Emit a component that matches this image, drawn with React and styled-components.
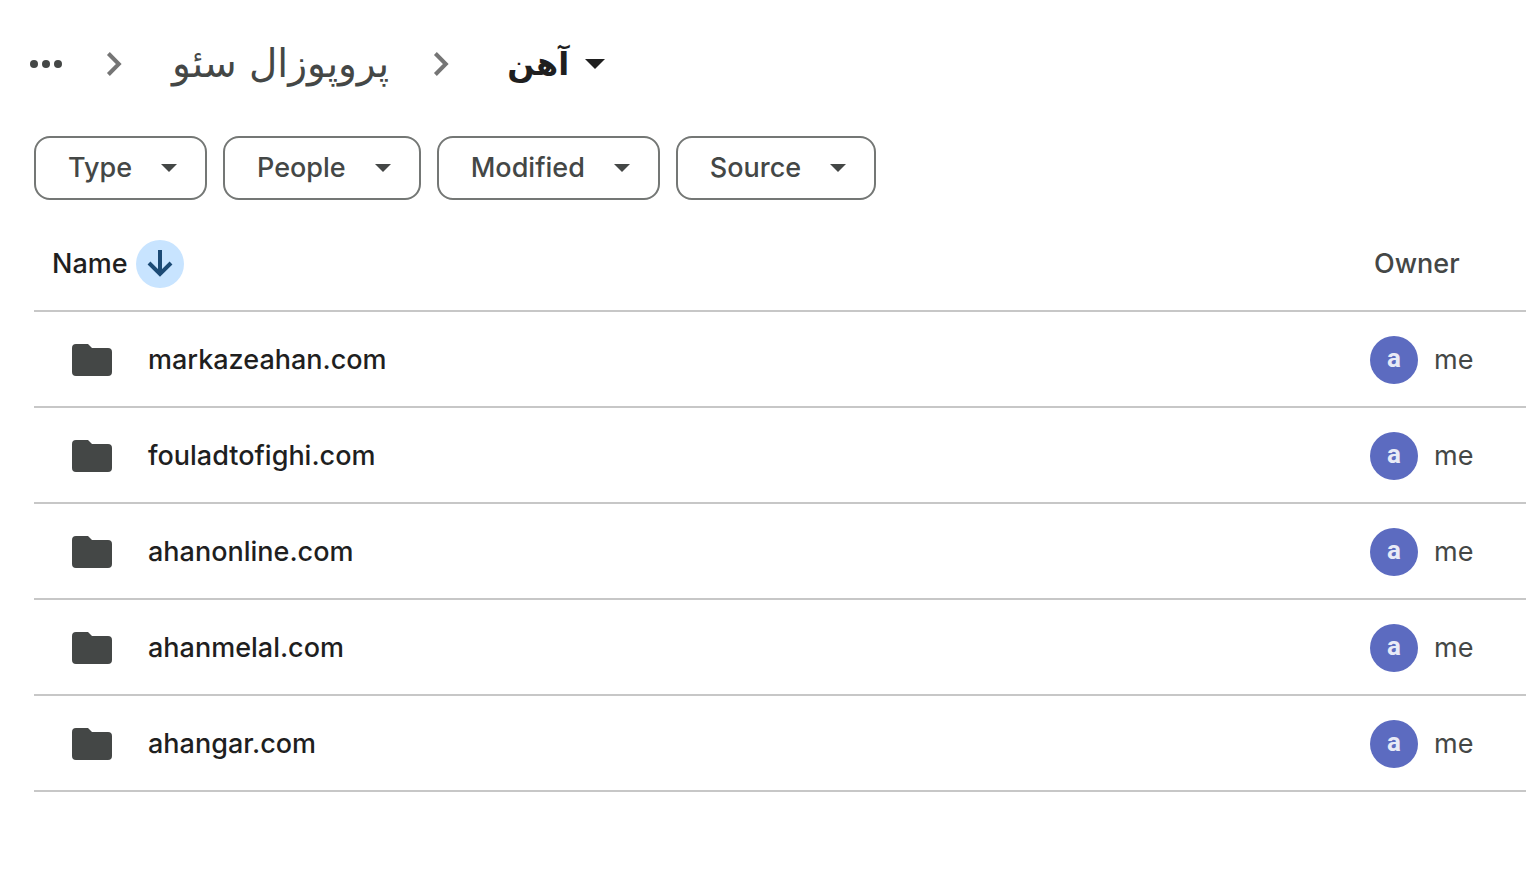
import React from "react";
import styled, { createGlobalStyle } from "styled-components";

const GlobalStyle = createGlobalStyle`
  *, *::before, *::after { box-sizing: border-box; }
  body {
    margin: 0;
    background: #fff;
    color: #1f1f1f;
    font-family: Inter, "Liberation Sans", sans-serif;
    font-size: 27px;
    line-height: 36px;
  }
  button { font: inherit; color: inherit; background: none; border: 0; padding: 0; cursor: pointer; }
  a { color: inherit; text-decoration: none; }
  svg { display: block; flex: none; }
`;

const Page = styled.main`
  padding: 24px 0 84px 34px;
`;

const Breadcrumbs = styled.nav`
  display: flex;
  align-items: center;
  height: 80px;
  margin-bottom: 32px;
  margin-left: -4px;
  font-family: "DejaVu Sans", sans-serif;
  font-size: 39px;
  line-height: 48px;
`;

const MoreButton = styled.button`
  display: flex;
  align-items: center;
  height: 48px;
  color: #444746;
`;

const Separator = styled.span`
  display: flex;
  margin: 0 48px 0 42px;
  color: #757575;
`;

const Crumb = styled.a`
  color: #444746;
`;

const CurrentCrumb = styled.button`
  display: flex;
  align-items: center;
  gap: 16px;
  margin-left: 8px;
  font-size: 32px;
`;

const Filters = styled.div`
  display: flex;
  gap: 16px;
`;

const FilterButton = styled.button`
  display: flex;
  align-items: center;
  gap: 29px;
  height: 64px;
  padding: 0 28px 0 32px;
  border: 2px solid #747775;
  border-radius: 16px;
  color: #444746;
  font-weight: 500;
`;

const FileTable = styled.table`
  width: 100%;
  margin-top: 16px;
  border-spacing: 0;
  table-layout: fixed;
`;

const HeadCell = styled.th`
  width: ${(p) => p.$width || "auto"};
  padding: 24px 0 22px ${(p) => p.$inset};
  border-bottom: 2px solid #c7c7c7;
  color: ${(p) => p.$color || "#444746"};
  font-weight: 500;
  text-align: left;
`;

const Cell = styled.td`
  padding: 24px 0 22px ${(p) => p.$inset || "0"};
  border-bottom: 2px solid #c7c7c7;
`;

const CellContent = styled.div`
  display: flex;
  align-items: center;
  gap: ${(p) => p.$gap || "0"};
  height: 48px;
`;

const SortButton = styled.button`
  display: grid;
  place-items: center;
  width: 48px;
  height: 48px;
  border-radius: 50%;
  background: #c8e4ff;
  color: #1b4a75;
`;

const FileLink = styled.a`
  font-weight: 500;
`;

const Avatar = styled.span`
  display: grid;
  place-items: center;
  width: 48px;
  height: 48px;
  border-radius: 50%;
  background: #5c6bc0;
  color: #e8eaf6;
  font-family: Roboto, sans-serif;
  font-size: 26px;
  font-weight: 700;
  line-height: 24px;
  padding-bottom: 4px;
`;

const OwnerName = styled.span`
  color: #444746;
`;

const Caret = ({ width, height }) => (
  <svg width={width} height={height} viewBox="0 0 20 10" preserveAspectRatio="none" aria-hidden="true">
    <path d="M0 0h20L10 10z" fill="currentColor" />
  </svg>
);

const DotsIcon = () => (
  <svg width="32" height="8" viewBox="0 0 32 8" fill="currentColor" aria-hidden="true">
    <circle cx="4" cy="4" r="4" />
    <circle cx="16" cy="4" r="4" />
    <circle cx="28" cy="4" r="4" />
  </svg>
);

const ChevronIcon = () => (
  <svg width="20" height="24" viewBox="0 0 20 24" fill="none" stroke="currentColor" strokeWidth="4" aria-hidden="true">
    <path d="M4.400 1.500 14.800 12 4.400 22.500" />
  </svg>
);

const ArrowDownIcon = () => (
  <svg width="26" height="28" viewBox="0 0 26 28" fill="none" stroke="currentColor" strokeWidth="4" aria-hidden="true">
    <path d="M13 0v24M2 13l11 11 11-11" />
  </svg>
);

const FolderIcon = () => (
  <svg width="40" height="32" viewBox="0 0 40 32" fill="#444746" aria-hidden="true">
    <path d="M4 0h12l4 4h16a4 4 0 0 1 4 4v20a4 4 0 0 1-4 4H4a4 4 0 0 1-4-4V4a4 4 0 0 1 4-4z" />
  </svg>
);

const filters = ["Type", "People", "Modified", "Source"];
const files = [
  "markazeahan.com",
  "fouladtofighi.com",
  "ahanonline.com",
  "ahanmelal.com",
  "ahangar.com",
];

export default function App() {
  return (
    <>
      <GlobalStyle />
      <Page>
        <Breadcrumbs aria-label="Folder path">
          <MoreButton type="button" aria-label="Show path">
            <DotsIcon />
          </MoreButton>
          <Separator><ChevronIcon /></Separator>
          <Crumb href="#parent" lang="fa" dir="rtl">پروپوزال سئو</Crumb>
          <Separator><ChevronIcon /></Separator>
          <CurrentCrumb type="button">
            <b lang="fa" dir="rtl">آهن</b>
            <Caret width="20" height="10" />
          </CurrentCrumb>
        </Breadcrumbs>

        <Filters>
          {filters.map((label) => (
            <FilterButton type="button" key={label}>
              {label}
              <Caret width="16" height="8" />
            </FilterButton>
          ))}
        </Filters>

        <FileTable>
          <thead>
            <tr>
              <HeadCell scope="col" $inset="18px" $color="#1f1f1f">
                <CellContent $gap="8px">
                  Name
                  <SortButton type="button" aria-label="Reverse sort direction">
                    <ArrowDownIcon />
                  </SortButton>
                </CellContent>
              </HeadCell>
              <HeadCell scope="col" $inset="4px" $width="156px">
                <CellContent>Owner</CellContent>
              </HeadCell>
            </tr>
          </thead>
          <tbody>
            {files.map((name) => (
              <tr key={name}>
                <Cell $inset="38px">
                  <CellContent $gap="36px">
                    <FolderIcon />
                    <FileLink href={`#${name}`}>{name}</FileLink>
                  </CellContent>
                </Cell>
                <Cell>
                  <CellContent $gap="16px">
                    <Avatar aria-hidden="true">a</Avatar>
                    <OwnerName>me</OwnerName>
                  </CellContent>
                </Cell>
              </tr>
            ))}
          </tbody>
        </FileTable>
      </Page>
    </>
  );
}
